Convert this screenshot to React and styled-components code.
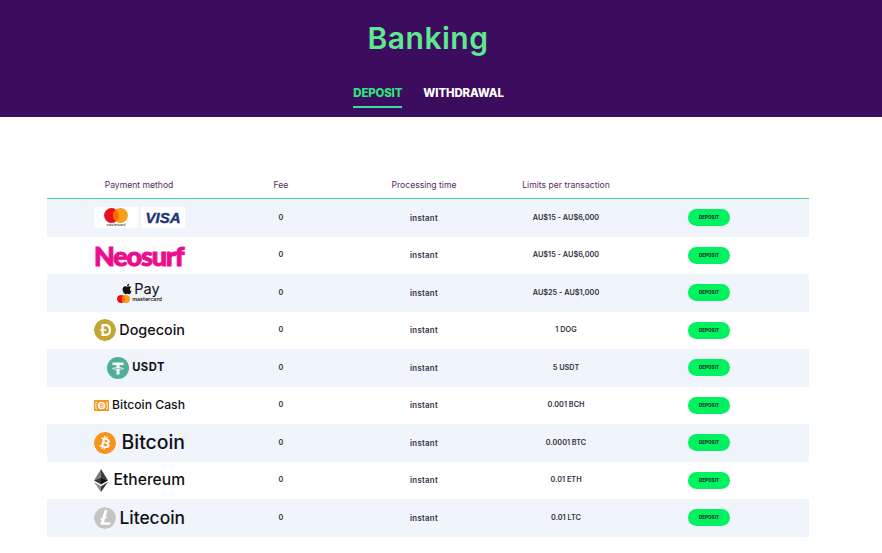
import React from 'react';
import styled, { createGlobalStyle } from 'styled-components';
import { FaApple } from 'react-icons/fa';
import { SiBitcoin, SiLitecoin, SiDogecoin } from 'react-icons/si';

const GlobalStyle = createGlobalStyle`
  html, body { margin: 0; background: #fff; }
  body { font-family: Inter, "Liberation Sans", sans-serif; }
`;

const Header = styled.header`
  height: 117px;
  background: #3c0c5e;
  display: flex;
  flex-direction: column;
  align-items: center;
`;

const Title = styled.h1`
  margin: 20px 26px 0 0;
  height: 37px;
  font: 600 30px/37px Inter, sans-serif;
  letter-spacing: 0.5px;
  color: #5ee88f;
`;

const Tabs = styled.nav`
  display: flex;
  gap: 21px;
  margin-top: 28px;
  margin-right: 25px;
`;

const Tab = styled.a`
  height: 20px;
  padding-top: 1px;
  font: 800 11.4px/14px Inter, sans-serif;
  letter-spacing: -0.12px;
  color: ${(p) => (p.$active ? '#2ee67c' : '#fff')};
  border-bottom: ${(p) => (p.$active ? '2px solid #3fdc9a' : 'none')};
`;

const Table = styled.section`
  width: 762px;
  margin: 51px 0 16px 47px;
`;

const columns = '184px 100px 186px 98px 194px';

const HeadRow = styled.div`
  display: grid;
  grid-template-columns: ${columns};
  height: 26px;
  padding-top: 4px;
  align-items: center;
  border-bottom: 1px solid #3fdc85;
`;

const HeadCell = styled.div`
  text-align: center;
  font: 400 8.6px/10px Inter, sans-serif;
  color: #5a2a62;
`;

const Row = styled.div`
  display: grid;
  grid-template-columns: ${columns};
  height: 37.5px;
  align-items: center;
  background: ${(p) => (p.$shaded ? '#f0f4fb' : '#fff')};
`;

const Cell = styled.div`
  text-align: center;
  font: 600 ${(p) => (p.$wide ? 7.8 : 7.3)}px/10px Inter, sans-serif;
  letter-spacing: ${(p) => (p.$wide ? 0.3 : 0)}px;
  color: #333042;
`;

const Method = styled.div`
  display: flex;
  box-sizing: border-box;
  justify-content: ${(p) => (p.$spread ? 'space-between' : 'center')};
  align-items: center;
  width: 91px;
  margin-left: 47px;
  padding-right: ${(p) => p.$inset || 0}px;
  gap: ${(p) => p.$gap || 3}px;
  color: #111;
`;

const CoinName = styled.span`
  font: 500 ${(p) => p.$size}px/1 Inter, sans-serif;
  white-space: nowrap;
  color: #101014;
`;

const UsdtName = styled.span`
  font: 700 11.2px/1 Inter, sans-serif;
  letter-spacing: 0.5px;
  color: #101014;
`;

const CardChip = styled.div`
  width: 44px;
  height: 21px;
  background: #fff;
  border-radius: 2px;
  display: flex;
  flex-direction: column;
  align-items: center;
  justify-content: center;
`;

const CardCaption = styled.span`
  font: 500 3.5px/4px Inter, sans-serif;
  color: #333;
`;

const VisaText = styled.span`
  font: italic 900 15px/1 "Liberation Sans", sans-serif;
  color: #1c3477;
  -webkit-text-stroke: 0.4px #1c3477;
`;

const NeosurfText = styled.span`
  font: 900 27px/1 Lato, sans-serif;
  letter-spacing: -1.2px;
  color: #ec0d8f;
  -webkit-text-stroke: 1px #ec0d8f;
`;

const PayStack = styled.div`
  display: flex;
  flex-direction: column;
  align-items: center;
`;

const PayLine = styled.div`
  display: flex;
  align-items: center;
  gap: 1px;
  margin-left: 2px;
  font: 400 14.5px/12px Inter, sans-serif;
  color: #111;
`;

const MasterLine = styled.div`
  display: flex;
  align-items: center;
  gap: 2px;
  font: 600 5.4px/8px Inter, sans-serif;
  color: #222;
`;

const DepositButton = styled.button`
  display: block;
  width: 42px;
  height: 17px;
  margin-left: 73px;
  padding: 0;
  border: none;
  border-radius: 9px;
  background: #00f261;
  font: 800 4.6px/17px Inter, sans-serif;
  color: #1c3a2c;
`;

const MasterMark = ({ width }) => (
  <svg width={width} height={width * 0.62} viewBox="0 0 32 20">
    <circle cx="10" cy="10" r="10" fill="#e8101f" />
    <circle cx="22" cy="10" r="10" fill="#f79e1b" />
    <path d="M16 2a10 10 0 0 1 0 16a10 10 0 0 1 0-16z" fill="#ff6a00" />
  </svg>
);

const BchMark = () => (
  <svg width="18" height="13" viewBox="0 0 18 13">
    <rect width="18" height="13" rx="1" fill="#f7931a" />
    <circle cx="9" cy="6.500" r="4.600" fill="#fff" />
    <path d="M3.600 2.400H2.200v8.200h1.400M14.400 2.400h1.400v8.200h-1.400" stroke="#fff" strokeWidth="1" fill="none" />
    <path d="M8 4.200v4.600M8 4.400h1.600a1 1 0 0 1 0 2.100H8M8 6.500h2a1.100 1.100 0 0 1 0 2.300H8" stroke="#f7931a" strokeWidth="0.9" fill="none" />
  </svg>
);

const TetherMark = () => (
  <svg width="22" height="22" viewBox="0 0 22 22">
    <circle cx="11" cy="11" r="11" fill="#50af95" />
    <path d="M5.500 5.500h11v2.600h-4v2.100c2.400.1 4.200.6 4.200 1.200s-1.800 1.100-4.200 1.200v5h-3v-5c-2.400-.1-4.200-.6-4.200-1.200s1.800-1.100 4.200-1.200V8.100h-4z" fill="#fff" />
    <path d="M6.500 11.200c1 .5 8 .5 9 0" stroke="#50af95" strokeWidth="0.7" fill="none" />
  </svg>
);

const EthereumMark = () => (
  <svg width="14" height="23" viewBox="0 0 14 23">
    <polygon points="7,0 0,11.500 7,8.500" fill="#7a7a7c" />
    <polygon points="7,0 14,11.500 7,8.500" fill="#3c3c3d" />
    <polygon points="7,8.500 0,11.500 7,15.500" fill="#393939" />
    <polygon points="7,8.500 14,11.500 7,15.500" fill="#141414" />
    <polygon points="0,13 7,23 7,17.200" fill="#8c8c8e" />
    <polygon points="14,13 7,23 7,17.200" fill="#3c3c3d" />
  </svg>
);

const Cards = () => (
  <Method $spread $gap={2}>
    <CardChip>
      <MasterMark width={24} />
      <CardCaption>mastercard</CardCaption>
    </CardChip>
    <CardChip>
      <VisaText>VISA</VisaText>
    </CardChip>
  </Method>
);

const ApplePay = () => (
  <Method>
    <PayStack>
      <PayLine><FaApple size={12} />Pay</PayLine>
      <MasterLine><MasterMark width={13} />mastercard</MasterLine>
    </PayStack>
  </Method>
);

const discStyle = { background: '#fff', borderRadius: '50%', flex: 'none' };

const rows = [
  { logo: <Cards />, limits: 'AU$15 - AU$6,000' },
  { logo: <Method $spread><NeosurfText>Neosurf</NeosurfText></Method>, limits: 'AU$15 - AU$6,000' },
  { logo: <ApplePay />, limits: 'AU$25 - AU$1,000' },
  {
    logo: (
      <Method $spread>
        <SiDogecoin size={22} color="#c2a633" style={discStyle} />
        <CoinName $size={14.4}>Dogecoin</CoinName>
      </Method>
    ),
    limits: '1 DOG',
  },
  {
    logo: (
      <Method $inset={7}>
        <TetherMark />
        <UsdtName>USDT</UsdtName>
      </Method>
    ),
    limits: '5 USDT',
  },
  {
    logo: (
      <Method $spread>
        <BchMark />
        <CoinName $size={12.2}>Bitcoin Cash</CoinName>
      </Method>
    ),
    limits: '0.001 BCH',
  },
  {
    logo: (
      <Method $spread>
        <SiBitcoin size={22} color="#f7931a" style={discStyle} />
        <CoinName $size={19.4}>Bitcoin</CoinName>
      </Method>
    ),
    limits: '0.0001 BTC',
  },
  {
    logo: (
      <Method $spread>
        <EthereumMark />
        <CoinName $size={15.6}>Ethereum</CoinName>
      </Method>
    ),
    limits: '0.01 ETH',
  },
  {
    logo: (
      <Method $spread>
        <SiLitecoin size={22} color="#c4c4c4" style={discStyle} />
        <CoinName $size={17.4}>Litecoin</CoinName>
      </Method>
    ),
    limits: '0.01 LTC',
  },
];

const App = () => (
  <>
    <GlobalStyle />
    <Header>
      <Title>Banking</Title>
      <Tabs>
        <Tab $active>DEPOSIT</Tab>
        <Tab>WITHDRAWAL</Tab>
      </Tabs>
    </Header>
    <Table>
      <HeadRow>
        <HeadCell>Payment method</HeadCell>
        <HeadCell>Fee</HeadCell>
        <HeadCell>Processing time</HeadCell>
        <HeadCell>Limits per transaction</HeadCell>
        <HeadCell />
      </HeadRow>
      {rows.map((row, i) => (
        <Row key={i} $shaded={i % 2 === 0}>
          {row.logo}
          <Cell>0</Cell>
          <Cell $wide>instant</Cell>
          <Cell>{row.limits}</Cell>
          <div><DepositButton>DEPOSIT</DepositButton></div>
        </Row>
      ))}
    </Table>
  </>
);

export default App;
